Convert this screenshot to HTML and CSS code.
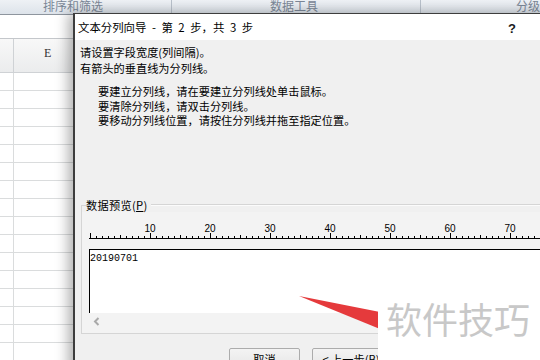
FILE: index.html
```html
<!DOCTYPE html>
<html lang="zh-CN">
<head>
<meta charset="utf-8">
<title>文本分列向导</title>
<link rel="stylesheet" href="styles.css">
</head>
<body>
<div class="sheet">
  <div class="ribbon">
    <div class="rgroup g1">排序和筛选</div>
    <div class="rgroup g2">数据工具</div>
    <div class="rgroup g3">分级</div>
  </div>
  <div class="formula"></div>
  <div class="colhead"><div class="corner"></div><div class="col">E</div></div>
  <div class="rows">
    <div class="row"><div class="rh"></div><div class="cell"></div></div>
    <div class="row"><div class="rh"></div><div class="cell"></div></div>
    <div class="row"><div class="rh"></div><div class="cell"></div></div>
    <div class="row"><div class="rh"></div><div class="cell"></div></div>
    <div class="row"><div class="rh"></div><div class="cell"></div></div>
    <div class="row"><div class="rh"></div><div class="cell"></div></div>
    <div class="row"><div class="rh"></div><div class="cell"></div></div>
    <div class="row"><div class="rh"></div><div class="cell"></div></div>
    <div class="row"><div class="rh"></div><div class="cell"></div></div>
    <div class="row"><div class="rh"></div><div class="cell"></div></div>
    <div class="row"><div class="rh"></div><div class="cell"></div></div>
    <div class="row"><div class="rh"></div><div class="cell"></div></div>
    <div class="row"><div class="rh"></div><div class="cell"></div></div>
    <div class="row"><div class="rh"></div><div class="cell"></div></div>
    <div class="row"><div class="rh"></div><div class="cell"></div></div>
    <div class="row"><div class="rh"></div><div class="cell"></div></div>
  </div>
</div>

<div class="dialog">
  <div class="title">
    <span class="title-text">文本分列向导 - 第 2 步，共 3 步</span>
    <span class="help">?</span>
  </div>
  <div class="body">
    <p class="intro">请设置字段宽度(列间隔)。<br>有箭头的垂直线为分列线。</p>
    <p class="tips">要建立分列线，请在要建立分列线处单击鼠标。<br>要清除分列线，请双击分列线。<br>要移动分列线位置，请按住分列线并拖至指定位置。</p>
    <div class="group">
      <div class="ghead"><span class="gcorner"></span><span class="glabel">数据预览(<u>P</u>)</span><span class="gline"></span></div>
      <div class="gbody">
        <svg class="ruler" width="460" height="37" viewBox="0 0 460 37">
          <defs>
            <pattern id="minor" patternUnits="userSpaceOnUse" x="1" y="0" width="6" height="37"><rect x="0" y="24" width="1" height="2" fill="#000"/></pattern>
            <pattern id="mid" patternUnits="userSpaceOnUse" x="1" y="0" width="30" height="37"><rect x="0" y="23" width="1" height="3" fill="#000"/></pattern>
            <pattern id="major" patternUnits="userSpaceOnUse" x="1" y="0" width="60" height="37"><rect x="0" y="21" width="1" height="5" fill="#000"/></pattern>
          </defs>
          <rect x="0" y="0" width="460" height="37" fill="url(#minor)"/>
          <rect x="0" y="0" width="460" height="37" fill="url(#mid)"/>
          <rect x="0" y="0" width="460" height="37" fill="url(#major)"/>
          <rect x="0" y="26" width="460" height="1" fill="#000"/>
          <g class="nums" text-anchor="middle">
            <text x="61" y="20">10</text>
            <text x="121" y="20">20</text>
            <text x="181" y="20">30</text>
            <text x="241" y="20">40</text>
            <text x="301" y="20">50</text>
            <text x="361" y="20">60</text>
            <text x="421" y="20">70</text>
          </g>
        </svg>
        <div class="preview">20190701</div>
        <div class="hscroll"><svg width="7" height="9" viewBox="0 0 7 9"><path d="M5.5 1 L2 4.5 L5.5 8" fill="none" stroke="#a9a9a9" stroke-width="2"/></svg></div>
      </div>
    </div>
    <div class="buttons">
      <div class="btn b1">取消</div>
      <div class="btn b2">&lt; 上一步(<u>B</u>)</div>
    </div>
  </div>
</div>

<svg class="arrow" width="540" height="360" viewBox="0 0 540 360">
  <polygon points="299,296 380,312 380,329" fill="#e53a3c"/>
</svg>

<div class="wm">软件技巧</div>
</body>
</html>
```

FILE: styles.css
```css
* { box-sizing: border-box; }
html, body { margin: 0; padding: 0; }
body {
  width: 540px;
  height: 360px;
  overflow: hidden;
  position: relative;
  background: #fff;
  font-family: "Noto Sans CJK SC", "Noto Sans", sans-serif;
  color: #000;
}

/* spreadsheet background */
.ribbon {
  height: 15px;
  display: flex;
  background: linear-gradient(#eef1f5, #dde3ea);
  border-bottom: 1px solid #8e959e;
  overflow: hidden;
}
.rgroup {
  height: 14px;
  border-right: 1px solid #b8c0ca;
  font-size: 12px;
  line-height: 11px;
  color: #7b8797;
  white-space: nowrap;
}
.g1 { width: 172px; padding-left: 43px; }
.g2 { width: 249px; padding-left: 98px; }
.g3 { flex: 1; padding-left: 95px; border-right: 0; }

.formula {
  height: 24px;
  border-bottom: 1px solid #c4c7cb;
}
.colhead {
  height: 34px;
  display: flex;
  background: linear-gradient(#f8f8f8, #ebeced);
  border-bottom: 1px solid #cfd2d5;
}
.corner { width: 14px; border-right: 1px solid #cfd2d5; }
.col {
  flex: 1;
  padding: 8px 0 0 30px;
  font-family: "Liberation Serif", serif;
  font-size: 12px;
  line-height: 12px;
  color: #333;
}
.row {
  height: 18px;
  display: flex;
  border-bottom: 1px solid #dadcdd;
}
.rh { width: 14px; border-right: 1px solid #dadcdd; }
.cell { flex: 1; }

/* dialog */
.dialog {
  position: absolute;
  left: 73px;
  top: 13px;
  width: 480px;
  height: 360px;
  border-left: 2px solid #3d3d3d;
  border-top: 1px solid #3d3d3d;
  background: #f0f0f0;
  box-shadow: -5px 0 12px rgba(0, 0, 0, 0.3);
  display: flex;
  flex-direction: column;
}
.title {
  height: 26px;
  flex: none;
  background: #fff;
  display: flex;
  align-items: center;
  padding: 0 3px;
  font-size: 11.4px;
  word-spacing: 3px;
}
.title-text { flex: 1; }
.help {
  width: 42px;
  padding-top: 2px;
  font-family: "Liberation Sans", sans-serif;
  font-size: 13px;
  font-weight: bold;
  color: #1a1a1a;
  word-spacing: 0;
}
.body {
  padding: 4px 0 0 5px;
  font-size: 11.2px;
}
.intro { margin: 0; line-height: 16px; }
.tips { margin: 8px 0 0 18px; line-height: 14.5px; }

.group { margin: 70px 0 0 1px; }
.ghead {
  display: flex;
  align-items: center;
  height: 14px;
}
.gcorner {
  align-self: flex-end;
  width: 5px;
  height: 7px;
  border-left: 1px solid #d5d5d5;
  border-top: 1px solid #d5d5d5;
}
.glabel { padding: 0 3px 0 0; line-height: 14px; letter-spacing: 0.3px; }
.gline {
  flex: 1;
  height: 2px;
  border-top: 1px solid #d5d5d5;
  border-bottom: 1px solid #fbfbfb;
}
.gbody {
  border-left: 1px solid #d5d5d5;
  border-bottom: 1px solid #d5d5d5;
  background: #f3f3f3;
  padding: 0 0 2px 7px;
}
.ruler { display: block; }
.nums {
  font-family: "Liberation Sans", sans-serif;
  font-size: 10px;
  fill: #000;
}
.preview {
  height: 64px;
  background: #fff;
  border-top: 1px solid #000;
  border-left: 1px solid #000;
  padding-top: 3px;
  font-family: "Liberation Mono", monospace;
  font-size: 10px;
  line-height: 12px;
}
.hscroll {
  height: 18px;
  margin-left: -7px;
  padding-left: 11px;
  display: flex;
  align-items: center;
}
.hscroll svg { display: block; }

.buttons {
  display: flex;
  gap: 12px;
  margin: 14px 0 0 149px;
}
.btn {
  height: 23px;
  border: 1px solid #acacac;
  border-radius: 2px;
  background: linear-gradient(#f3f3f3, #ececec 50%, #dedede 51%, #d6d6d6);
  display: flex;
  justify-content: center;
  padding-top: 3px;
  line-height: 14px;
  white-space: nowrap;
}
.b1 { width: 71px; }
.b2 { width: 78px; }

/* overlays */
.arrow {
  position: absolute;
  left: 0;
  top: 0;
  pointer-events: none;
}
.wm {
  position: absolute;
  left: 378px;
  top: 300px;
  right: 0;
  bottom: 0;
  background: #fff;
  padding-left: 8px;
  font-size: 36px;
  line-height: 36px;
  color: #c8c8c8;
  white-space: nowrap;
}
```
